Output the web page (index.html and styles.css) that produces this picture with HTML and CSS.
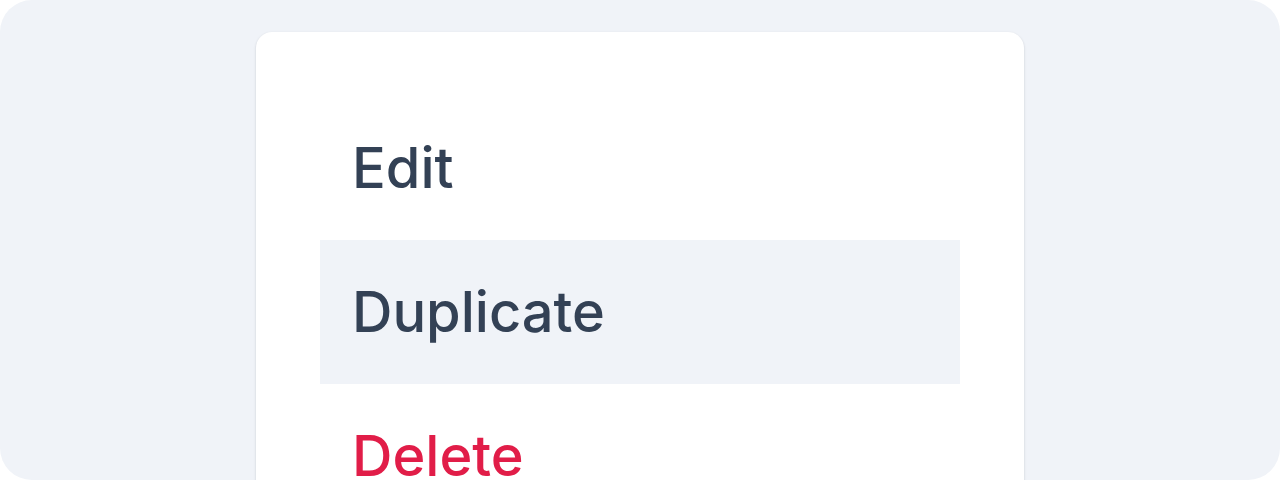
FILE: index.html
```html
<!DOCTYPE html>
<html>
<head>
	<meta charset="utf-8">
	<title>Menu</title>
	<link rel="stylesheet" href="styles.css">
</head>
<body>
	<div class="stage">
		<div class="card">
			<ul class="menu">
				<li class="item">Edit</li>
				<li class="item active">Duplicate</li>
				<li class="item danger">Delete</li>
			</ul>
		</div>
	</div>
</body>
</html>
```
FILE: styles.css
```css
body,html{
	margin: 0;
	padding: 0;
	background-color: white;
}
*{
	font-family: Inter, "Liberation Sans", sans-serif;
	box-sizing: border-box;
}
.stage{
	width: 1280px;
	height: 480px;
	border-radius: 32px;
	background-color: #f0f3f8;
	overflow: hidden;
	padding-top: 32px;
	display: flex;
	justify-content: center;
}
.card{
	width: 768px;
	height: 600px;
	background-color: white;
	border-radius: 16px;
	box-shadow: 0 1px 3px rgba(15, 23, 42, 0.12), 0 1px 2px rgba(15, 23, 42, 0.06);
}
.menu{
	list-style: none;
	margin: 0;
	padding: 64px;
}
.item{
	padding: 36px 32px;
	font-size: 56px;
	font-weight: 500;
	line-height: 72px;
	color: #334155;
}
.active{
	background-color: #f0f3f8;
}
.danger{
	color: #e11d48;
}
```
